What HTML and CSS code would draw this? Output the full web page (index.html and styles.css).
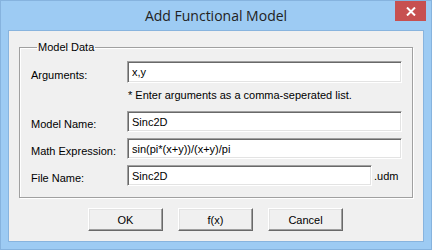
FILE: index.html
```html
<!DOCTYPE html>
<html lang="en">
<head>
    <meta charset="UTF-8">
    <meta name="viewport" content="width=device-width, initial-scale=1.0">
    <title>Add Functional Model</title>
    <link rel="stylesheet" href="styles.css">
</head>
<body>
    <div class="window">
        <div class="titlebar">
            <span class="title">Add Functional Model</span>
            <button class="close" aria-label="Close">
                <svg width="10" height="9" viewBox="0 0 10 9">
                    <path d="M1 0.5 L9 8.5 M9 0.5 L1 8.5" stroke="#fff" stroke-width="2" fill="none"/>
                </svg>
            </button>
        </div>

        <div class="client">
            <fieldset class="group">
                <legend>Model Data</legend>
                <div class="form">
                    <label>Arguments:</label>
                    <input type="text" class="field tall" value="x,y">

                    <span></span>
                    <p class="hint">* Enter arguments as a comma-seperated list.</p>

                    <label>Model Name:</label>
                    <input type="text" class="field" value="Sinc2D">

                    <label>Math Expression:</label>
                    <input type="text" class="field" value="sin(pi*(x+y))/(x+y)/pi">

                    <label>File Name:</label>
                    <div class="file-row">
                        <input type="text" class="field" value="Sinc2D">
                        <span class="ext">.udm</span>
                    </div>
                </div>
            </fieldset>

            <div class="buttons">
                <button class="btn">OK</button>
                <button class="btn">f(x)</button>
                <button class="btn">Cancel</button>
            </div>
        </div>
    </div>
</body>
</html>
```

FILE: styles.css
```css
* {
    margin: 0;
    padding: 0;
    box-sizing: border-box;
}

body {
    background: #9dcbf3;
    font-family: 'Liberation Sans', Arial, sans-serif;
    font-size: 11px;
    color: #000;
}

.window {
    width: 432px;
    height: 250px;
    background: #9dcbf3;
    border: 1px solid #86b3de;
    display: flex;
    flex-direction: column;
}

.titlebar {
    position: relative;
    height: 29px;
    display: flex;
    justify-content: center;
    align-items: center;
}

.title {
    font-family: 'Open Sans', 'Noto Sans', sans-serif;
    font-size: 14px;
    color: #222;
    padding-bottom: 1px;
}

.close {
    position: absolute;
    top: 0;
    right: 5px;
    width: 31px;
    height: 20px;
    background: #c75050;
    border: none;
    display: flex;
    justify-content: center;
    align-items: center;
}

.client {
    flex: 1;
    margin: 0 7px 7px 7px;
    background: #f0f0f0;
    border: 1px solid #88b4de;
}

.group {
    margin: 10px 10px 0 10px;
    height: 157px;
    border: 1px solid #a0a0a0;
    box-shadow: inset 1px 1px 0 #fff, 1px 1px 0 #fff;
    padding: 7px 10px 0 11px;
}

.group legend {
    margin-left: 6px;
    padding: 0 1px;
    line-height: 13px;
    color: #000;
}

.form {
    display: grid;
    grid-template-columns: 96px 1fr;
    align-items: center;
}

.form label {
    line-height: 13px;
}

.field {
    height: 21px;
    width: 100%;
    font-family: inherit;
    font-size: 11px;
    padding: 0 4px;
    background: #fff;
    border: 1px solid;
    border-color: #a0a0a0 #fff #fff #a0a0a0;
    box-shadow: inset 1px 1px 0 #696969, inset -1px -1px 0 #e3e3e3;
    outline: none;
}

.field.tall {
    height: 22px;
}

.hint {
    line-height: 13px;
    margin: 0 0 9px 1px;
}

.form .field,
.file-row {
    margin-bottom: 6px;
}

.file-row {
    display: flex;
    align-items: center;
    gap: 2px;
}

.file-row .field {
    width: 245px;
    margin: 0;
}

.buttons {
    display: flex;
    justify-content: center;
    gap: 15px;
    margin-top: 10px;
    padding-right: 1px;
}

.btn {
    width: 75px;
    height: 23px;
    font-family: inherit;
    font-size: 11px;
    color: #000;
    background: #f0f0f0;
    border: 1px solid;
    border-color: #fff #696969 #696969 #fff;
    box-shadow: inset -1px -1px 0 #a0a0a0, inset 1px 1px 0 #e3e3e3;
}
```
